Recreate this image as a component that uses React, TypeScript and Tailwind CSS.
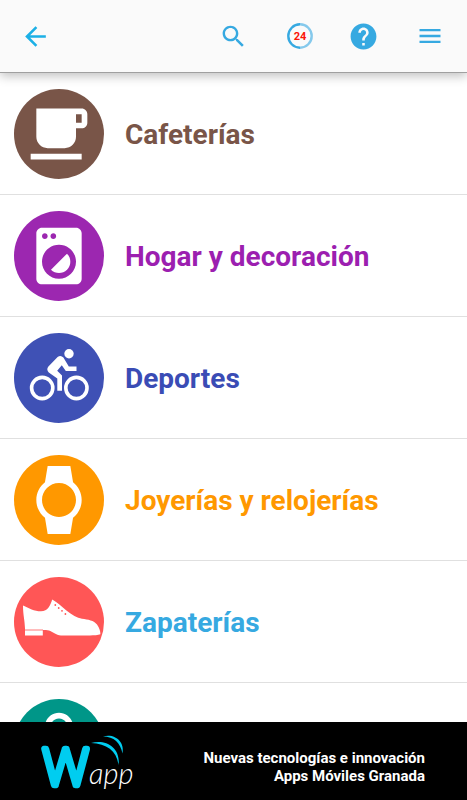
import type { ReactNode } from "react";

type Category = {
  id: string;
  name: string;
  textClass: string;
  circleClass: string;
  icon: ReactNode;
};

function MaterialIcon({ d, className }: { d: string; className: string }) {
  return (
    <svg viewBox="0 0 24 24" fill="currentColor" className={className} aria-hidden="true">
      <path d={d} />
    </svg>
  );
}

function BikeIcon() {
  return (
    <svg viewBox="0 0 90 90" className="size-full" fill="currentColor" aria-hidden="true">
      <g fill="none" stroke="currentColor" strokeWidth="3.6">
        <circle cx="28.2" cy="55" r="10.6" />
        <circle cx="62.4" cy="55" r="10.6" />
      </g>
      <circle cx="55" cy="20.8" r="4.7" />
      <path d="M62.5 33.6H54.8L49.4 24.6Q46.8 21.8 43.6 24L34.4 33.6Q32 36.6 34.8 39.4L43.3 45.6V57.7H48V42.4L43.2 37.8L47.8 32.3L51.8 38H62.5Z" />
    </svg>
  );
}

function ShoeIcon() {
  return (
    <svg viewBox="0 0 90 90" className="size-full" fill="currentColor" aria-hidden="true">
      <path d="M9 28.4C15 31 20 34.2 27 34.3C34 34 36 29 38.2 22.4C43 25 47 29 52.4 33.4C58 37.6 63 41 68 41.8C74 42.6 80 43.4 83 47.6C85.4 51 86.4 54 86.4 57.2C84 58 80 58.4 76 58.4H47C42 58 38.6 54.4 35 53.4C33 52.9 31 52.9 28.8 52.9V58.6H11V51.6C10.8 43 9 38 9 28.4Z" />
      <path d="M11 53H29" stroke="#ff5656" strokeWidth="0.8" />
      <g fill="#ff5656">
        <circle cx="41.3" cy="28" r="0.9" />
        <circle cx="44.7" cy="31" r="0.9" />
        <circle cx="48" cy="33.8" r="0.9" />
        <circle cx="51.4" cy="37" r="0.9" />
      </g>
    </svg>
  );
}

const categories: Category[] = [
  {
    id: "cafeterias",
    name: "Cafeterías",
    textClass: "text-[#795548]",
    circleClass: "bg-[#795548]",
    icon: (
      <MaterialIcon
        className="size-[68px]"
        d="M20 3H4v10c0 2.21 1.79 4 4 4h6c2.21 0 4-1.79 4-4v-3h2c1.11 0 2-.89 2-2V5c0-1.11-.89-2-2-2zm0 5h-2V5h2v3zM2 21h18v-2H2v2z"
      />
    ),
  },
  {
    id: "hogar",
    name: "Hogar y decoración",
    textClass: "text-[#9c1fb0]",
    circleClass: "bg-[#9c27b0]",
    icon: (
      <MaterialIcon
        className="size-[68px]"
        d="M9.17 16.83c1.56 1.56 4.1 1.56 5.66 0 1.56-1.56 1.56-4.1 0-5.66l-5.66 5.66zM18 2.01L6 2c-1.11 0-2 .89-2 2v16c0 1.11.89 2 2 2h12c1.11 0 2-.89 2-2V4c0-1.11-.89-1.99-2-1.99zM10 4c.55 0 1 .45 1 1s-.45 1-1 1-1-.45-1-1 .45-1 1-1zM7 4c.55 0 1 .45 1 1s-.45 1-1 1-1-.45-1-1 .45-1 1-1zm5 16c-3.31 0-6-2.69-6-6s2.69-6 6-6 6 2.69 6 6-2.69 6-6 6z"
      />
    ),
  },
  {
    id: "deportes",
    name: "Deportes",
    textClass: "text-[#3a4cb5]",
    circleClass: "bg-[#3f51b5]",
    icon: <BikeIcon />,
  },
  {
    id: "joyerias",
    name: "Joyerías y relojerías",
    textClass: "text-[#ff9800]",
    circleClass: "bg-[#ff9800]",
    icon: (
      <MaterialIcon
        className="size-[68px]"
        d="M20 12c0-2.54-1.19-4.81-3.04-6.27L16 0H8l-.95 5.73C5.19 7.19 4 9.45 4 12s1.19 4.81 3.05 6.27L8 24h8l.96-5.73C18.81 16.81 20 14.54 20 12zM6 12c0-3.31 2.69-6 6-6s6 2.69 6 6-2.69 6-6 6-6-2.69-6-6z"
      />
    ),
  },
  {
    id: "zapaterias",
    name: "Zapaterías",
    textClass: "text-[#36a9e1]",
    circleClass: "bg-[#ff5656]",
    icon: <ShoeIcon />,
  },
  {
    id: "moda",
    name: "",
    textClass: "text-[#009688]",
    circleClass: "bg-[#009688]",
    icon: (
      <MaterialIcon
        className="size-[68px]"
        d="M19 6h-2c0-2.76-2.24-5-5-5S7 3.24 7 6H5c-1.1 0-1.99.9-1.99 2L3 20c0 1.1.9 2 2 2h14c1.1 0 2-.9 2-2V8c0-1.1-.9-2-2-2zm-7-3c1.66 0 3 1.34 3 3H9c0-1.66 1.34-3 3-3zm0 10c-2.76 0-5-2.24-5-5h2c0 1.66 1.34 3 3 3s3-1.34 3-3h2c0 2.76-2.24 5-5 5z"
      />
    ),
  },
];

export default function App() {
  return (
    <div className="flex h-screen flex-col bg-white font-[Roboto,sans-serif]">
      <TopBar />

      <main className="min-h-0 flex-1 overflow-y-auto [scrollbar-width:none]">
        <ul>
          {categories.map((category) => (
            <CategoryRow key={category.id} category={category} />
          ))}
        </ul>
      </main>

      <Banner />
    </div>
  );
}

function TopBar() {
  return (
    <header className="relative z-10 flex h-[73px] shrink-0 items-center border-b border-[#a0a0a0] bg-[#fafafa] px-5 text-[#36a9e1] shadow-[0_3px_10px_rgba(0,0,0,0.25)]">
      <button type="button" aria-label="Atrás" className="text-[#1cb0e6]">
        <MaterialIcon
          className="size-[31px]"
          d="M20 11H7.83l5.59-5.59L12 4l-8 8 8 8 1.41-1.41L7.83 13H20v-2z"
        />
      </button>

      <div className="ml-auto flex items-center gap-[37px]">
        <button type="button" aria-label="Buscar" className="flex w-[34px] justify-center">
          <MaterialIcon
            className="size-[29px]"
            d="M15.5 14h-.79l-.28-.27C15.41 12.59 16 11.11 16 9.5 16 5.91 13.09 3 9.5 3S3 5.91 3 9.5 5.91 16 9.5 16c1.61 0 3.09-.59 4.23-1.57l.27.28v.79l5 4.99L20.49 19l-4.99-5zm-6 0C7.01 14 5 11.99 5 9.5S7.01 5 9.5 5 14 7.01 14 9.5 11.99 14 9.5 14z"
          />
        </button>
        <button type="button" className="grid size-[26px] place-items-center">
          <svg viewBox="0 0 26 26" className="col-start-1 row-start-1 size-[26px]" fill="none" strokeWidth="2.4" aria-hidden="true">
            <path d="M13 1.3a11.7 11.7 0 0 0 0 23.4" stroke="#36a9e1" />
            <path d="M13 1.3a11.7 11.7 0 0 1 0 23.4" stroke="#85c9ec" />
          </svg>
          <span className="col-start-1 row-start-1 text-[11px] leading-none font-bold text-[#fb1507]">24</span>
        </button>
        <button type="button" aria-label="Ayuda" className="flex w-[26px] justify-center">
          <MaterialIcon
            className="size-[31px] shrink-0"
            d="M12 2C6.48 2 2 6.48 2 12s4.48 10 10 10 10-4.48 10-10S17.52 2 12 2zm1 17h-2v-2h2v2zm2.07-7.75l-.9.92C13.45 12.9 13 13.5 13 15h-2v-.5c0-1.1.45-2.1 1.17-2.83l1.24-1.26c.37-.36.59-.86.59-1.41 0-1.1-.9-2-2-2s-2 .9-2 2H8c0-2.21 1.79-4 4-4s4 1.79 4 4c0 .88-.36 1.68-.93 2.25z"
          />
        </button>
        <button type="button" aria-label="Menú" className="flex w-[34px] justify-center">
          <MaterialIcon className="size-[28px]" d="M3 18h18v-2H3v2zm0-5h18v-2H3v2zm0-7v2h18V6H3z" />
        </button>
      </div>
    </header>
  );
}

function CategoryRow({ category }: { category: Category }) {
  return (
    <li className="border-b border-[#e0e0e0]">
      <a href={`#${category.id}`} className="flex h-[121px] items-center gap-[21px] px-[14px]">
        <span
          className={`flex size-[90px] shrink-0 items-center justify-center rounded-full text-white ${category.circleClass}`}
        >
          {category.icon}
        </span>
        <span className={`pt-0.5 text-[28px] font-bold ${category.textClass}`}>{category.name}</span>
      </a>
    </li>
  );
}

function Banner() {
  return (
    <footer className="flex h-[78px] shrink-0 items-center justify-between bg-black pr-[42px] pl-10 text-white">
      <Logo />
      <p className="pt-3 text-right text-[15px] leading-[18px] font-bold">
        Nuevas tecnologías e innovación
        <br />
        Apps Móviles Granada
      </p>
    </footer>
  );
}

function Logo() {
  return (
    <svg viewBox="0 0 100 78" className="h-[78px] w-[100px]" role="img" aria-label="Wapp">
      <text
        x="3"
        y="63"
        fontFamily="Roboto"
        fontWeight="100"
        fontSize="50"
        fill="#00cdf0"
        stroke="#00cdf0"
        strokeWidth="6.5"
        strokeLinejoin="round"
      >
        W
      </text>
      <text x="49" y="62" fontFamily="Lato" fontStyle="italic" fontWeight="300" fontSize="29" fill="#fff">
        app
      </text>
      <g fill="#00cdf0">
        <path d="M51 21C66 16.5 81 26 78.5 43C77 29.5 67 21.5 51 21Z" />
        <path d="M63 14.5C75 11 85 20 82.5 31.5C80.5 21 74 14.5 63 14.5Z" />
      </g>
    </svg>
  );
}
